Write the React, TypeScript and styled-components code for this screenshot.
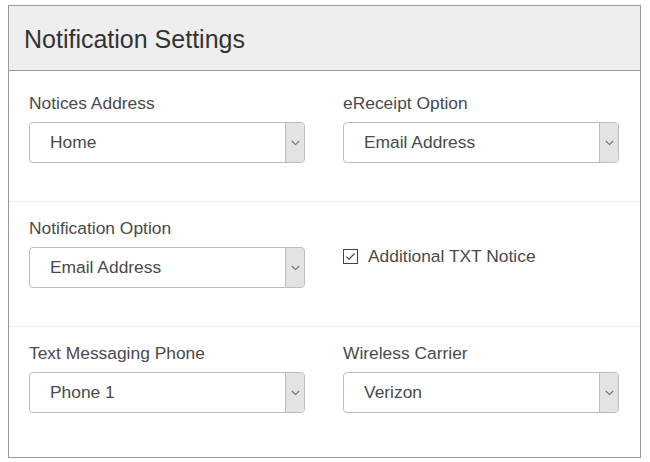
import React from "react";
import styled, { createGlobalStyle } from "styled-components";

const GlobalStyle = createGlobalStyle`
  html, body {
    margin: 0;
    padding: 0;
    background: #ffffff;
  }
  body {
    font-family: "Liberation Sans", Arial, sans-serif;
    color: #4a4a4a;
  }
  * { box-sizing: border-box; }
`;

const Page = styled.div`
  padding: 5px 9px 0 8px;
`;

const Panel = styled.section`
  border: 1px solid #9a9a9a;
  background: #ffffff;
`;

const Header = styled.header`
  height: 65px;
  display: flex;
  align-items: center;
  padding-left: 15px;
  background: #eeeeee;
  border-bottom: 1px solid #9a9a9a;
`;

const Title = styled.h1`
  margin: 0;
  font-size: 25px;
  line-height: 28px;
  padding-top: 1px;
  font-weight: 400;
  color: #333333;
`;

const Body = styled.div`
  padding: 6px 0 6px;
`;

const Row = styled.div<{ $divider?: boolean }>`
  display: grid;
  grid-template-columns: 276px 276px;
  column-gap: 38px;
  padding: 15px 21px 38px 20px;
  border-top: ${(p) => (p.$divider ? "1px solid #eeeeee" : "none")};
`;

const Field = styled.div`
  display: flex;
  flex-direction: column;
`;

const Label = styled.label`
  display: block;
  font-size: 17.4px;
  line-height: 20px;
  padding-top: 1px;
  height: 20px;
  color: #4a4a4a;
  margin-bottom: 10px;
`;

const SelectBox = styled.div`
  height: 41px;
  display: flex;
  align-items: stretch;
  border: 1px solid #bdbdbd;
  border-radius: 4px;
  background: #ffffff;
  overflow: hidden;
`;

const SelectValue = styled.span`
  flex: 1;
  display: flex;
  align-items: center;
  padding-left: 20px;
  font-size: 17.4px;
  color: #4a4a4a;
`;

const Caret = styled.span`
  width: 19px;
  display: flex;
  align-items: center;
  justify-content: center;
  background: #e3e3e3;
  border-left: 1px solid #bdbdbd;
`;

const CheckRow = styled.div`
  display: flex;
  align-items: center;
  gap: 10px;
  padding-top: 28px;
  font-size: 17.4px;
  line-height: 22px;
  color: #4a4a4a;
`;

const CheckBoxIcon = () => (
  <svg width="15" height="15" viewBox="0 0 15 15" aria-hidden="true">
    <rect x="0.5" y="0.5" width="14" height="14" fill="#fff" stroke="#444" strokeWidth="1" />
    <polyline points="3.3,7.6 6,10.2 11.6,4.4" fill="none" stroke="#444" strokeWidth="1.2" />
  </svg>
);

const Chevron = () => (
  <svg width="9" height="6" viewBox="0 0 9 6" aria-hidden="true">
    <polyline points="0.8,1 4.5,4.6 8.2,1" fill="none" stroke="#707070" strokeWidth="1.1" />
  </svg>
);

const Select = ({ value }: { value: string }) => (
  <SelectBox>
    <SelectValue>{value}</SelectValue>
    <Caret>
      <Chevron />
    </Caret>
  </SelectBox>
);

export default function App() {
  return (
    <>
      <GlobalStyle />
      <Page>
        <Panel>
          <Header>
            <Title>Notification Settings</Title>
          </Header>
          <Body>
            <Row>
              <Field>
                <Label>Notices Address</Label>
                <Select value="Home" />
              </Field>
              <Field>
                <Label>eReceipt Option</Label>
                <Select value="Email Address" />
              </Field>
            </Row>
            <Row $divider>
              <Field>
                <Label>Notification Option</Label>
                <Select value="Email Address" />
              </Field>
              <Field>
                <CheckRow>
                  <CheckBoxIcon />
                  <span>Additional TXT Notice</span>
                </CheckRow>
              </Field>
            </Row>
            <Row $divider>
              <Field>
                <Label>Text Messaging Phone</Label>
                <Select value="Phone 1" />
              </Field>
              <Field>
                <Label>Wireless Carrier</Label>
                <Select value="Verizon" />
              </Field>
            </Row>
          </Body>
        </Panel>
      </Page>
    </>
  );
}
